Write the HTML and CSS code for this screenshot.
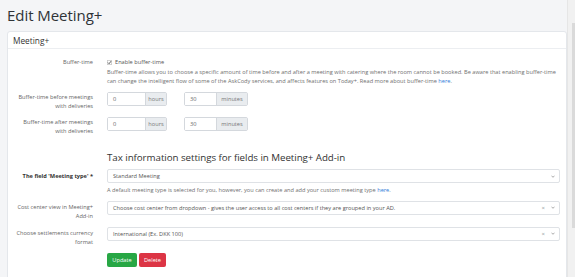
FILE: index.html
```html
<!DOCTYPE html>
<html>
<head>
<meta charset="utf-8">
<link rel="stylesheet" href="styles.css">
</head>
<body>
<div class="page">
  <h1 class="title">Edit Meeting+</h1>
  <div class="card">
    <div class="card-header">Meeting+</div>
    <div class="card-body">
      <div class="row row-check">
        <div class="label">Buffer-time</div>
        <div class="field">
          <div class="check-line">
            <svg class="checkbox" width="5" height="5" viewBox="0 0 5 5"><rect x="0.25" y="0.25" width="4.5" height="4.5" rx="0.6" fill="#fff" stroke="#8a8a8a" stroke-width="0.5"/><path d="M1 2.6 L2.1 3.7 L4 1.2" fill="none" stroke="#333" stroke-width="0.8"/></svg>
            <span>Enable buffer-time</span>
          </div>
          <div class="help desc"><span class="nw">Buffer-time allows you to choose a specific amount of time before and after a meeting with catering where the room cannot be booked. Be aware that enabling buffer-time</span><br><span class="nw">can change the intelligent flow of some of the AskCody services, and affects features on Today+. Read more about buffer-time <a class="link">here</a>.</span></div>
        </div>
      </div>

      <div class="row row-input first">
        <div class="label">Buffer-time before meetings with deliveries</div>
        <div class="field inputs">
          <div class="input-group g-hours"><div class="input">0</div><div class="addon">hours</div></div>
          <div class="input-group g-min"><div class="input">30</div><div class="addon">minutes</div></div>
        </div>
      </div>

      <div class="row row-input second">
        <div class="label">Buffer-time after meetings with deliveries</div>
        <div class="field inputs">
          <div class="input-group g-hours"><div class="input">0</div><div class="addon">hours</div></div>
          <div class="input-group g-min"><div class="input">30</div><div class="addon">minutes</div></div>
        </div>
      </div>

      <div class="row row-heading">
        <div class="label"></div>
        <h2 class="section-title">Tax information settings for fields in Meeting+ Add-in</h2>
      </div>

      <div class="row row-select first-select">
        <div class="label strong">The field 'Meeting type' *</div>
        <div class="field">
          <div class="select"><span class="value">Standard Meeting</span><span class="icons"><svg class="caret" width="4" height="3" viewBox="0 0 4 3"><path d="M0.5 0.7 L2 2.3 L3.5 0.7" fill="none" stroke="#888" stroke-width="0.7"/></svg></span></div>
          <div class="help note">A default meeting type is selected for you, however, you can create and add your custom meeting type <a class="link">here</a>.</div>
        </div>
      </div>

      <div class="row row-select cost">
        <div class="label">Cost center view in Meeting+ Add-in</div>
        <div class="field">
          <div class="select"><span class="value">Choose cost center from dropdown - gives the user access to all cost centers if they are grouped in your AD.</span><span class="icons"><span class="clear">×</span><svg class="caret" width="4" height="3" viewBox="0 0 4 3"><path d="M0.5 0.7 L2 2.3 L3.5 0.7" fill="none" stroke="#888" stroke-width="0.7"/></svg></span></div>
        </div>
      </div>

      <div class="row row-select currency">
        <div class="label">Choose settlements currency format</div>
        <div class="field">
          <div class="select"><span class="value">International (Ex. DKK 100)</span><span class="icons"><span class="clear">×</span><svg class="caret" width="4" height="3" viewBox="0 0 4 3"><path d="M0.5 0.7 L2 2.3 L3.5 0.7" fill="none" stroke="#888" stroke-width="0.7"/></svg></span></div>
        </div>
      </div>

      <div class="row row-buttons">
        <div class="label"></div>
        <div class="field buttons">
          <button class="btn btn-update">Update</button>
          <button class="btn btn-delete">Delete</button>
        </div>
      </div>
    </div>
  </div>
</div>
<div class="scrollbar"><div class="thumb"></div></div>
</body>
</html>
```
FILE: styles.css
```css
html, body {
  margin: 0;
  padding: 0;
  height: 100%;
  overflow: hidden;
}
body {
  background: #f4f5f7;
  font-family: "Open Sans", "Noto Sans", sans-serif;
  color: #555;
  font-size: 5.65px;
}
.page {
  padding: 5px 8px 0 7px;
}
.title {
  margin: 0;
  font-size: 15px;
  line-height: 20px;
  font-weight: 400;
  color: #2f3337;
  letter-spacing: -0.05px;
}
.card {
  margin-top: 6px;
  background: #fff;
  border: 1px solid #e4e7eb;
  border-radius: 3px;
  height: 300px;
}
.card-header {
  height: 16px;
  line-height: 17px;
  padding-left: 5px;
  font-size: 8.3px;
  color: #333;
  border-bottom: 1px solid #eceef1;
}
.card-body {
  padding: 8.5px 6px 0 6px;
}
.row {
  display: grid;
  grid-template-columns: 79px 453px;
  column-gap: 14px;
  align-items: start;
}
.label {
  text-align: right;
  line-height: 9px;
  color: #666;
}
.label.strong {
  font-weight: 700;
  color: #333;
}
.check-line {
  display: flex;
  align-items: center;
  gap: 3px;
  height: 9px;
  color: #555;
}
.checkbox {
  display: block;
}
.help {
  color: #707070;
  line-height: 9px;
}
.desc {
  margin-top: 1px;
}
.nw {
  white-space: nowrap;
}
.link {
  color: #2f7bd8;
}
.row-input.first {
  margin-top: 6.5px;
}
.row-input.second {
  margin-top: 6.5px;
}
.row-input .label {
  padding-top: 0.5px;
}
.inputs {
  display: flex;
  gap: 17px;
}
.input-group {
  display: flex;
  height: 14px;
  border: 1px solid #d4d8dd;
  border-radius: 2px;
  box-sizing: border-box;
}
.g-hours { width: 60px; }
.g-min { width: 64px; }
.input {
  flex: 1;
  padding-left: 5px;
  line-height: 12px;
  color: #666;
  background: #fff;
}
.addon {
  background: #e9ecef;
  border-left: 1px solid #d4d8dd;
  line-height: 12px;
  color: #777;
  text-align: center;
}
.g-hours .addon { width: 20px; }
.g-min .addon { width: 30px; }
.row-heading {
  margin-top: 16.5px;
}
.section-title {
  margin: 0;
  font-size: 9.75px;
  line-height: 12px;
  font-weight: 400;
  color: #333;
  letter-spacing: -0.05px;
}
.row-select .label {
  padding-top: 2.5px;
}
.row-select.first-select {
  margin-top: 5px;
}
.row-select.cost {
  margin-top: 6px;
}
.row-select.currency {
  margin-top: 5.5px;
}
.select {
  height: 14px;
  box-sizing: border-box;
  border: 1px solid #dfe2e6;
  border-radius: 2px;
  display: flex;
  align-items: center;
  padding-left: 5px;
  color: #555;
}
.select .value {
  flex: 1;
  white-space: nowrap;
}
.icons {
  display: flex;
  align-items: center;
  gap: 6px;
  padding-right: 4px;
}
.clear {
  color: #999;
  font-size: 6px;
  line-height: 6px;
}
.caret {
  display: block;
}
.note {
  margin-top: 2.5px;
}
.row-buttons {
  margin-top: 5.5px;
}
.buttons {
  display: flex;
  gap: 2px;
}
.btn {
  height: 14px;
  border: none;
  border-radius: 2px;
  color: #fff;
  font-family: "Open Sans", "Noto Sans", sans-serif;
  font-size: 5.65px;
  padding: 0;
  text-align: center;
}
.btn-update {
  width: 30px;
  background: #28a745;
}
.btn-delete {
  width: 27px;
  background: #dc3545;
}
.scrollbar {
  position: fixed;
  top: 0;
  right: 0;
  width: 7px;
  height: 100%;
  background: #f1f1f1;
  border-left: 1px solid #e6e6e6;
}
.thumb {
  position: absolute;
  right: 0;
  top: 23px;
  width: 3px;
  height: 205px;
  background: #dadada;
}
```
